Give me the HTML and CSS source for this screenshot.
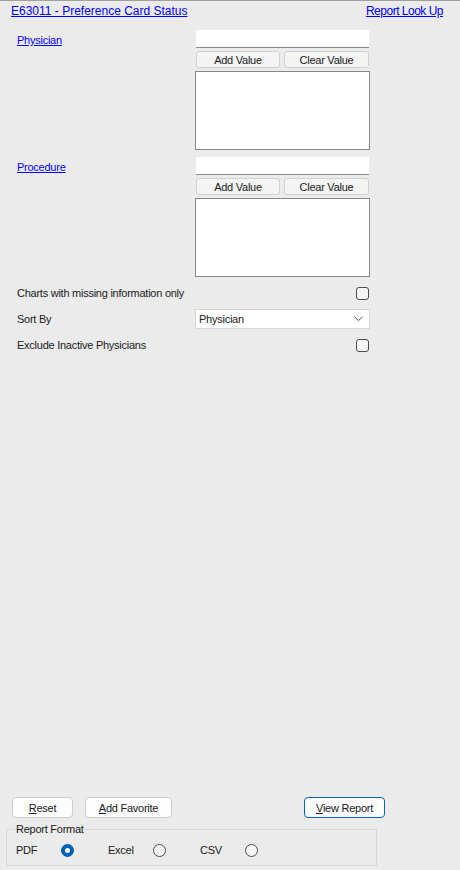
FILE: index.html
```html
<!DOCTYPE html>
<html>
<head>
<meta charset="utf-8">
<link rel="stylesheet" href="styles.css">
</head>
<body>
<div class="page">
  <header class="topbar">
    <a class="link" href="#">E63011 - Preference Card Status</a>
    <a class="link lookup" href="#">Report Look Up</a>
  </header>

  <section class="form">
    <div class="picker">
      <a class="link field-label" href="#">Physician</a>
      <div class="picker-controls">
        <div class="textbox"></div>
        <div class="btn-pair">
          <button class="small-btn">Add Value</button>
          <button class="small-btn">Clear Value</button>
        </div>
        <div class="listbox"></div>
      </div>
    </div>

    <div class="picker">
      <a class="link field-label" href="#">Procedure</a>
      <div class="picker-controls">
        <div class="textbox"></div>
        <div class="btn-pair">
          <button class="small-btn">Add Value</button>
          <button class="small-btn">Clear Value</button>
        </div>
        <div class="listbox"></div>
      </div>
    </div>

    <div class="option-row first">
      <span class="opt-label">Charts with missing information only</span>
      <span class="checkbox"></span>
    </div>
    <div class="option-row">
      <span class="opt-label">Sort By</span>
      <div class="select">
        <span>Physician</span>
        <svg class="chev" width="9" height="6" viewBox="0 0 9 6"><path d="M0.5 0.8 L4.5 4.6 L8.5 0.8" fill="none" stroke="#5a5a5a" stroke-width="1"/></svg>
      </div>
    </div>
    <div class="option-row">
      <span class="opt-label">Exclude Inactive Physicians</span>
      <span class="checkbox"></span>
    </div>
  </section>

  <div class="spacer"></div>

  <footer class="footer">
    <div class="action-row">
      <button class="btn btn-reset"><u>R</u>eset</button>
      <button class="btn btn-fav"><u>A</u>dd Favorite</button>
      <button class="btn btn-view"><u>V</u>iew Report</button>
    </div>
    <fieldset class="format">
      <legend>Report Format</legend>
      <div class="radios">
        <div class="radio-opt"><span class="radio-label">PDF</span><span class="radio checked"></span></div>
        <div class="radio-opt"><span class="radio-label">Excel</span><span class="radio"></span></div>
        <div class="radio-opt"><span class="radio-label">CSV</span><span class="radio"></span></div>
      </div>
    </fieldset>
  </footer>
</div>
</body>
</html>
```
FILE: styles.css
```css
* { box-sizing: border-box; }
html, body {
  margin: 0;
  padding: 0;
  background: #ebebeb;
}
body {
  font-family: "Liberation Sans", Arial, sans-serif;
  font-size: 11px;
  letter-spacing: -0.25px;
  line-height: 14px;
  color: #1a1a1a;
}
.page {
  height: 870px;
  display: flex;
  flex-direction: column;
  border-top: 1px solid #a0a0a0;
}
.link {
  color: #0000ff;
  text-decoration: underline;
}
.topbar {
  display: flex;
  justify-content: space-between;
  padding: 3px 17px 12px 11px;
  font-size: 12px;
  letter-spacing: 0;
}
.topbar .lookup { letter-spacing: -0.5px; }
.form {
  display: flex;
  flex-direction: column;
  padding-left: 17px;
  width: 370px;
}
.picker {
  display: grid;
  grid-template-columns: 178px 175px;
  margin-bottom: 7px;
}
.picker + .picker { margin-bottom: 0; }
.field-label {
  align-self: start;
  margin-top: 3px;
}
.picker-controls {
  display: flex;
  flex-direction: column;
  gap: 3px;
}
.textbox {
  height: 18px;
  margin: 0 1px;
  background: #fff;
  border-bottom: 1px solid #8a8a8a;
}
.btn-pair {
  display: flex;
  gap: 4px;
  margin: 0 1px;
}
.small-btn {
  flex: 1;
  height: 17px;
  padding: 0;
  font: inherit;
  letter-spacing: inherit;
  color: #1a1a1a;
  background: #f4f4f4;
  border: 1px solid #d0d0d0;
  border-radius: 3px;
  line-height: 14px;
}
.small-btn:first-child { flex: 0 0 84px; }
.listbox {
  height: 79px;
  background: #fff;
  border: 1px solid #828790;
}
.option-row {
  display: grid;
  grid-template-columns: 178px 175px;
  align-items: center;
  height: 20px;
  margin-top: 6px;
}
.opt-label { white-space: nowrap; }
.checkbox {
  justify-self: end;
  margin-right: 1px;
  width: 13px;
  height: 13px;
  border: 1px solid #4a4a4a;
  border-radius: 3px;
  background: #f6f6f6;
}
.select {
  height: 20px;
  background: #fff;
  border: 1px solid #d6d6d6;
  display: flex;
  align-items: center;
  justify-content: space-between;
  padding: 0 6px 0 3px;
}
.chev { display: block; }
.spacer { flex: 1; }
.footer {
  display: flex;
  flex-direction: column;
}
.action-row {
  display: flex;
  padding-left: 12px;
  height: 21px;
}
.btn {
  height: 21px;
  padding: 0;
  font: inherit;
  letter-spacing: inherit;
  color: #1a1a1a;
  background: #fdfdfd;
  border: 1px solid #cccccc;
  border-radius: 4px;
}
.btn u { text-decoration: underline; }
.btn-reset { width: 61px; }
.btn-fav { width: 87px; margin-left: 12px; }
.btn-view {
  width: 81px;
  margin-left: 132px;
  border-color: #0067c0;
}
.format {
  margin: 4px 0 4px 6px;
  width: 371px;
  padding: 0 8px 8px 8px;
  border: 1px solid #d8d8d8;
}
.format legend {
  padding: 0 1px;
  line-height: 14px;
}
.radios {
  display: flex;
  margin-top: 7px;
  margin-left: 1px;
  height: 14px;
  align-items: center;
}
.radio-opt {
  display: flex;
  align-items: center;
  width: 92px;
}
.radio-label { width: 45px; }
.radio {
  width: 13px;
  height: 13px;
  border-radius: 50%;
  border: 1px solid #4a4a4a;
  background: #f6f6f6;
  position: relative;
}
.radio.checked {
  border-color: #005fb8;
  background: #005fb8;
}
.radio.checked::after {
  content: "";
  position: absolute;
  left: 3px;
  top: 3px;
  width: 5px;
  height: 5px;
  border-radius: 50%;
  background: #fff;
}
```
